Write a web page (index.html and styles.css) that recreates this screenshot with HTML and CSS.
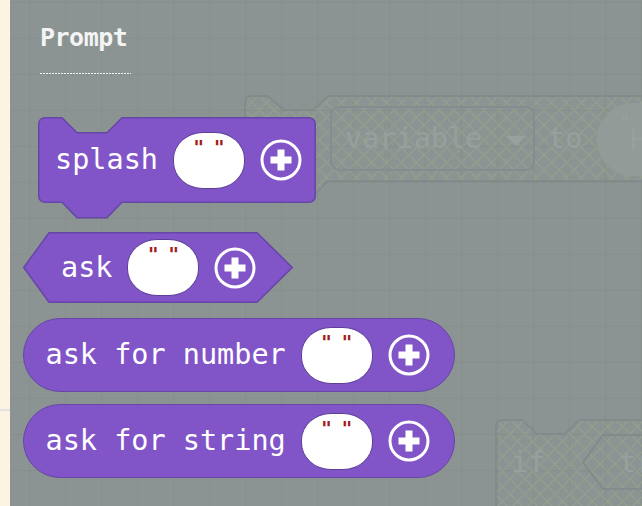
FILE: index.html
```html
<!DOCTYPE html>
<html>
<head>
<meta charset="utf-8">
<link rel="stylesheet" href="styles.css">
</head>
<body>
<div class="toolbox"></div>
<div class="workspace">
  <svg class="ghost ghost-set" width="420" height="110" viewBox="0 0 420 110">
    <defs>
      <pattern id="hatchA" width="15" height="15" patternUnits="userSpaceOnUse">
        <path d="M0 0L15 15M15 0L0 15" stroke="#a8ae84" stroke-opacity=".35" stroke-width="1.2"/>
      </pattern>
    </defs>
    <path d="M1 7a6 6 0 0 1 6-6H24L40 15H69L84 1H420V86H84L69 101H39L23 86H7a6 6 0 0 1-6-6Z" fill="url(#hatchA)" stroke="#83878b" stroke-width="1.5"/>
    <rect x="87" y="12" width="203" height="63" rx="8" fill="none" stroke="#878a8e" stroke-width="2"/>
    <text class="ghost-text" x="101" y="53">variable</text>
    <path d="M262 41h20l-10 10z" fill="#99a09e"/>
    <text class="ghost-text" x="304" y="53">to</text>
    <rect x="353" y="8" width="90" height="73" rx="36" fill="#939b99"/>
    <text class="ghost-quote" x="376" y="34">"</text>
    <text class="ghost-text" x="386" y="55">H</text>
  </svg>
  <svg class="ghost ghost-if" width="160" height="100" viewBox="0 0 160 100">
    <defs>
      <pattern id="hatchB" width="15" height="15" patternUnits="userSpaceOnUse">
        <path d="M0 0L15 15M15 0L0 15" stroke="#a8ae84" stroke-opacity=".35" stroke-width="1.2"/>
      </pattern>
    </defs>
    <path d="M1 7a6 6 0 0 1 6-6H27L42 15H70L84 1H170V110H1Z" fill="url(#hatchB)" stroke="#83878b" stroke-width="1.5"/>
    <path d="M88 43L108 16H170V70H108Z" fill="none" stroke="#83878b" stroke-width="1.5"/>
    <text class="ghost-text" x="16" y="53">if</text>
    <text class="ghost-text" x="124" y="53">tr</text>
  </svg>

  <div class="flyout">
    <div class="title">Prompt</div>
    <div class="rule"></div>

    <div class="block block-stmt">
      <svg class="shape" width="280" height="104" viewBox="0 0 280 104">
        <path d="M0.75 6.75a6 6 0 0 1 6-6H24L39 15.75H69L84 0.75H271.25a6 6 0 0 1 6 6V79.25a6 6 0 0 1-6 6H84L69 100.75H39L24 85.25H6.75a6 6 0 0 1-6-6Z" class="shape-path"/>
      </svg>
      <span class="label">splash</span>
      <span class="oval"><span>"</span><span>"</span></span>
      <svg class="plus" viewBox="0 0 42 42"><circle cx="21" cy="21" r="19" fill="none" stroke="#fff" stroke-width="3"/><path d="M21 10.5v21M10.5 21h21" stroke="#fff" stroke-width="7"/></svg>
    </div>

    <div class="block block-hex">
      <svg class="shape" width="270" height="71" viewBox="0 0 270 71">
        <path d="M0.75 35.5L26 0.75H234L269.25 35.5L234 70.25H26Z" class="shape-path"/>
      </svg>
      <span class="label">ask</span>
      <span class="oval"><span>"</span><span>"</span></span>
      <svg class="plus" viewBox="0 0 42 42"><circle cx="21" cy="21" r="19" fill="none" stroke="#fff" stroke-width="3"/><path d="M21 10.5v21M10.5 21h21" stroke="#fff" stroke-width="7"/></svg>
    </div>

    <div class="block block-pill pill-num">
      <span class="label">ask for number</span>
      <span class="oval"><span>"</span><span>"</span></span>
      <svg class="plus" viewBox="0 0 42 42"><circle cx="21" cy="21" r="19" fill="none" stroke="#fff" stroke-width="3"/><path d="M21 10.5v21M10.5 21h21" stroke="#fff" stroke-width="7"/></svg>
    </div>

    <div class="block block-pill pill-str">
      <span class="label">ask for string</span>
      <span class="oval"><span>"</span><span>"</span></span>
      <svg class="plus" viewBox="0 0 42 42"><circle cx="21" cy="21" r="19" fill="none" stroke="#fff" stroke-width="3"/><path d="M21 10.5v21M10.5 21h21" stroke="#fff" stroke-width="7"/></svg>
    </div>
  </div>
</div>
</body>
</html>
```

FILE: styles.css
```css
* { box-sizing: border-box; }
html, body { margin: 0; padding: 0; }
body {
  width: 642px;
  height: 506px;
  overflow: hidden;
  display: flex;
  font-family: "DejaVu Sans Mono", monospace;
}
.toolbox {
  width: 10px;
  flex: none;
  background: #fcf3e3 linear-gradient(#e2e3e5, #e2e3e5) 0 409px / 100% 2px no-repeat;
}
.workspace {
  flex: 1;
  position: relative;
  background-color: #8b9492;
  background-image:
    linear-gradient(90deg, rgba(0, 0, 0, 0.03) 1px, transparent 1px),
    linear-gradient(rgba(0, 0, 0, 0.03) 1px, transparent 1px);
  background-size: 36px 36px;
  background-position: 19px 2px;
}
.ghost { position: absolute; overflow: visible; }
.ghost-set { left: 234px; top: 95px; }
.ghost-if { left: 485px; top: 419px; }
.ghost-text {
  font-family: "DejaVu Sans Mono", monospace;
  font-size: 28.5px;
  fill: #98a09e;
}
.ghost-quote {
  font-family: "DejaVu Sans", sans-serif;
  font-size: 20px;
  fill: #98a09e;
}
.flyout {
  position: relative;
  display: flex;
  flex-direction: column;
  align-items: flex-start;
  padding: 23px 0 0 13px;
}
.title {
  margin-left: 17px;
  font: bold 25px/30px "DejaVu Sans Mono", monospace;
  letter-spacing: -0.5px;
  color: #f4f4f4;
}
.rule {
  margin: 20px 0 0 17px;
  width: 91px;
  height: 1px;
  background: repeating-linear-gradient(90deg, #f4f4f4 0 2px, transparent 2px 3px);
}
.block {
  position: relative;
  display: flex;
  align-items: center;
  gap: 15px;
  color: #fff;
  font-size: 28.5px;
  line-height: 34px;
}
.block > .label, .block > .oval, .block > .plus { position: relative; }
.shape { position: absolute; left: 0; top: 0; overflow: visible; }
.shape-path { fill: #8155c8; stroke: #6646a6; stroke-width: 1.5; }
.block-stmt {
  margin: 43px 0 0 15px;
  width: 278px;
  height: 86px;
  padding: 0 16px 0 17px;
}
.block-hex {
  margin-top: 29px;
  width: 270px;
  height: 71px;
  padding-left: 38px;
}
.block-pill {
  width: 432px;
  height: 74px;
  padding-left: 21.5px;
  background: #8155c8;
  border: 1.5px solid #6646a6;
  border-radius: 37px;
}
.pill-num { margin-top: 15px; }
.pill-str { margin-top: 12px; }
.oval {
  flex: none;
  width: 72px;
  height: 57px;
  background: #fff;
  border: 1px solid #5d3f99;
  border-radius: 30px / 27px;
  display: flex;
  justify-content: center;
  gap: 10px;
  padding-top: 4px;
  font: bold 20px/1 "DejaVu Sans", sans-serif;
  color: #a11d1d;
}
.plus { width: 42px; height: 42px; flex: none; }
```
